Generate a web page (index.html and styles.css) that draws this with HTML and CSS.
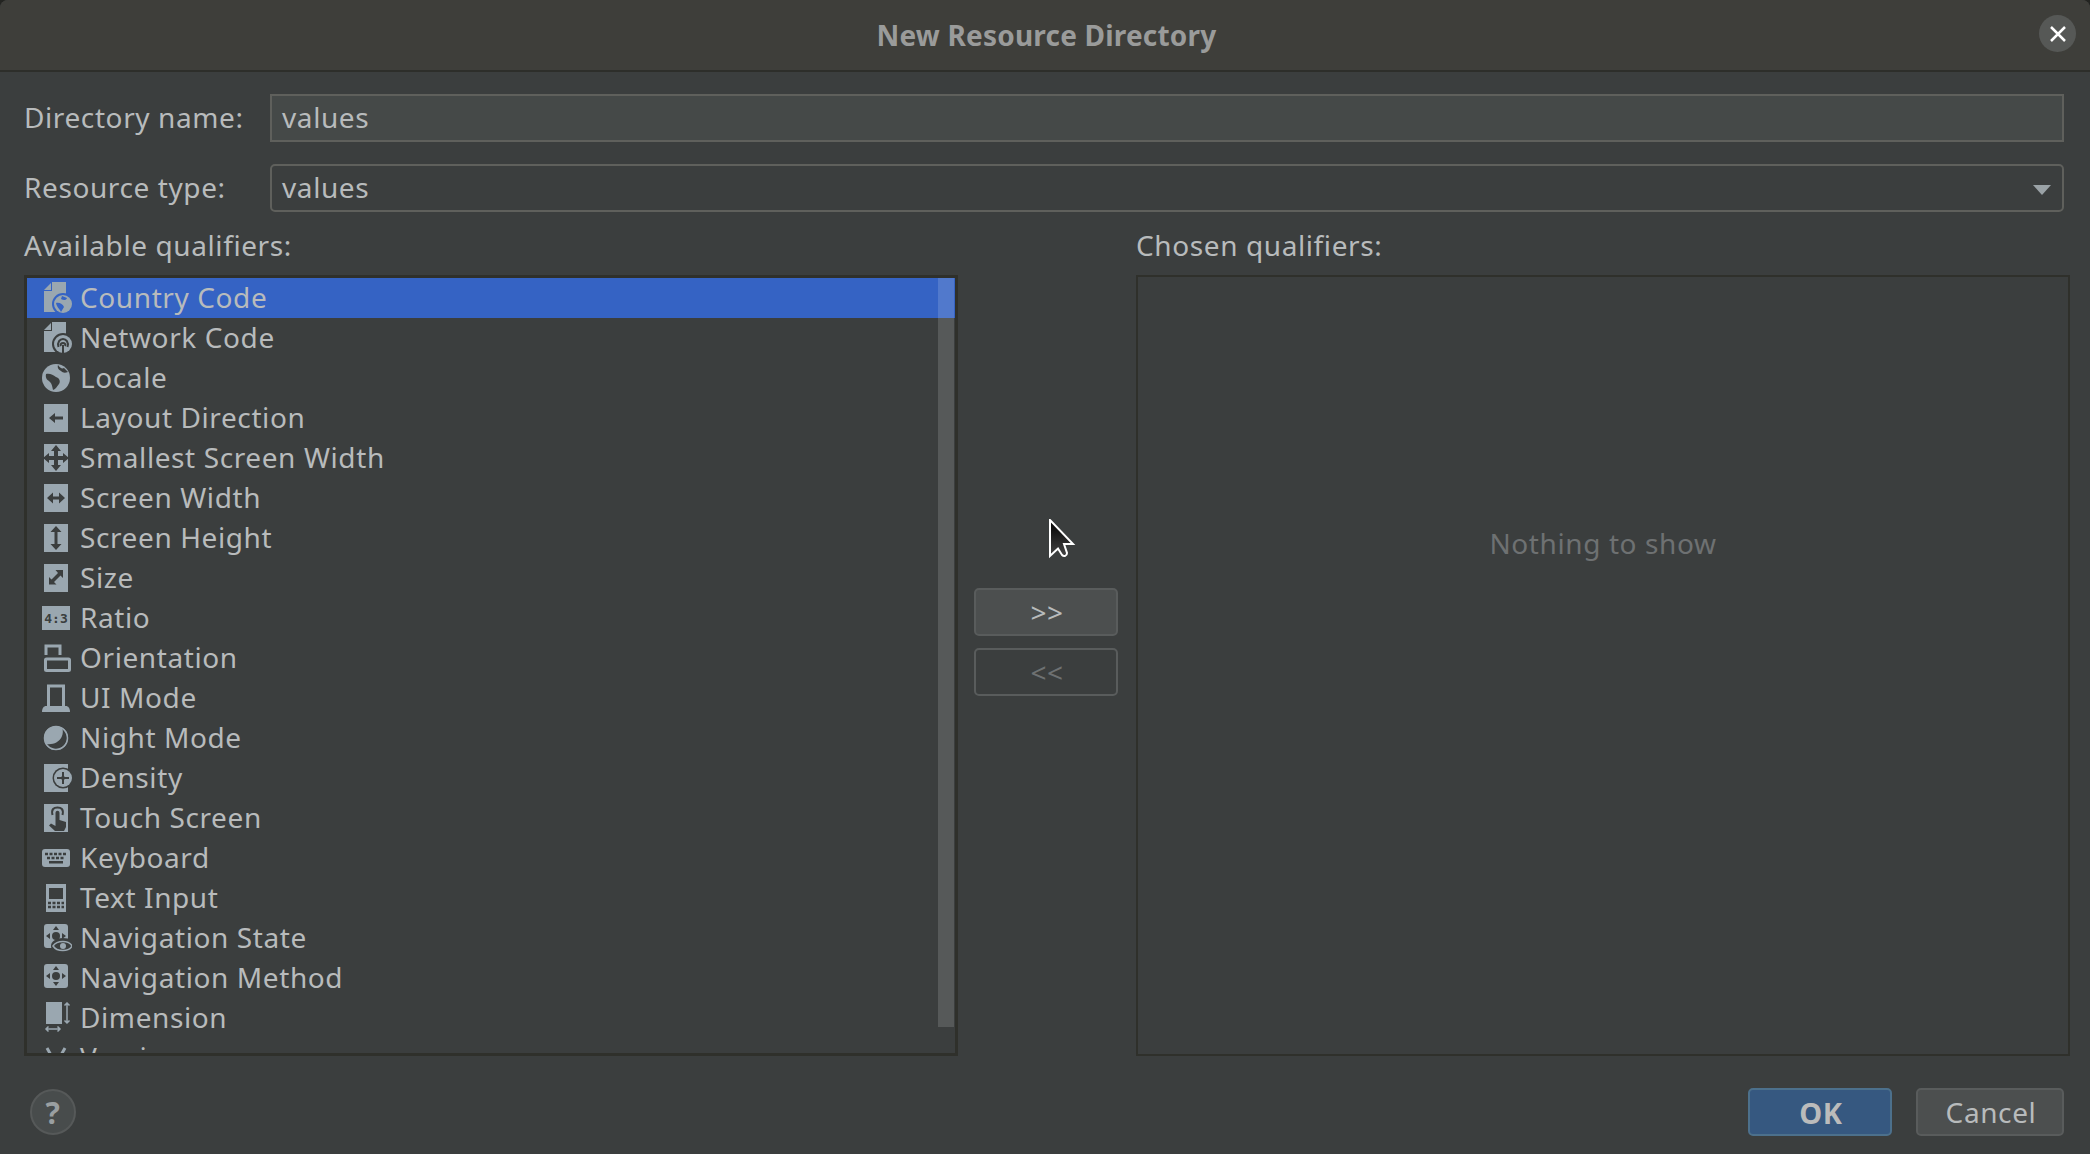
FILE: index.html
```html
<!DOCTYPE html>
<html lang="en">
<head>
  <meta charset="UTF-8">
  <title>New Resource Directory</title>
  <link rel="stylesheet" href="styles.css">
</head>
<body>
  <svg class="sprite" xmlns="http://www.w3.org/2000/svg">
    <symbol id="i-file" viewBox="0 0 32 32"><path d="M4 8L11 1V8Z"/><path d="M12 0H26V30H4V9H12Z"/></symbol>
    <symbol id="i-globe" viewBox="0 0 32 32"><circle cx="16" cy="16" r="14"/><path class="cut" d="M18 3C20 6 22 7 24 6L28 10C25 11 23 11 21 9C19 8 17 6 18 3ZM6 12C10 11 13 13 16 15C19 16 21 19 19 22C17 24 16 27 13 28C12 24 12 22 10 20C8 18 5 17 6 12Z"/></symbol>
    <symbol id="i-box" viewBox="0 0 32 32"><rect x="4" y="2" width="24" height="28"/></symbol>
  </svg>

  <div class="dialog">
    <header class="title-bar">
      <h1>New Resource Directory</h1>
      <button class="close" type="button">
        <svg width="18" height="18" viewBox="0 0 18 18"><path d="M2 2L16 16M16 2L2 16"/></svg>
      </button>
    </header>

    <main class="content">
      <div class="field">
        <label>Directory name:</label>
        <div class="input">values</div>
      </div>
      <div class="field">
        <label>Resource type:</label>
        <div class="select">values<span class="caret"></span></div>
      </div>

      <div class="qualifiers">
        <section class="col-left">
          <div class="col-label">Available qualifiers:</div>
          <div class="list">
            <ul>
              <li class="selected">
                <svg class="ico" viewBox="0 0 32 32"><use href="#i-file"/><circle class="cut" cx="23" cy="22" r="11"/><circle cx="23" cy="22" r="9"/><path class="cut" d="M22 14L27 16C26 19 23 18 21 17ZM16 21C19 20 23 22 24 25L21 30C20 27 17 26 16 21Z"/></svg>
                Country Code
              </li>
              <li>
                <svg class="ico" viewBox="0 0 32 32"><use href="#i-file"/><circle class="cut" cx="23" cy="22" r="11"/><circle cx="23" cy="22" r="9"/><path class="cut-line" d="M18.500 25C17 20 20 17 23 17S29 20 27.500 25M21 24C20 22 21.500 21 23 21S26 22 25 24"/><path class="cut-line" d="M23 23V31"/></svg>
                Network Code
              </li>
              <li><svg class="ico" viewBox="0 0 32 32"><use href="#i-globe"/></svg>Locale</li>
              <li>
                <svg class="ico" viewBox="0 0 32 32"><use href="#i-box"/><path class="cut" d="M9 16L15 11V14.500H23V17.500H15V21Z"/></svg>
                Layout Direction
              </li>
              <li>
                <svg class="ico" viewBox="0 0 32 32"><use href="#i-box"/><path class="cut" d="M16 3L21 9H18V14H23V11L29 16L23 21V18H18V23H21L16 29L11 23H14V18H9V21L3 16L9 11V14H14V9H11Z"/></svg>
                Smallest Screen Width
              </li>
              <li>
                <svg class="ico" viewBox="0 0 32 32"><use href="#i-box"/><path class="cut" d="M7 16L13 10.500V14.500H19V10.500L25 16L19 21.500V17.500H13V21.500Z"/></svg>
                Screen Width
              </li>
              <li>
                <svg class="ico" viewBox="0 0 32 32"><use href="#i-box"/><path class="cut" d="M16 4L21.500 10H17.500V22H21.500L16 28L10.500 22H14.500V10H10.500Z"/></svg>
                Screen Height
              </li>
              <li>
                <svg class="ico" viewBox="0 0 32 32"><use href="#i-box"/><path class="cut" d="M23 8V16L20.500 13.500L14 20L16.500 22.500H9V15L11.500 17.500L18 11L15.500 8Z"/></svg>
                Size
              </li>
              <li>
                <svg class="ico" viewBox="0 0 32 32"><rect x="2" y="4" width="28" height="24"/><text class="ratio" x="16" y="21" text-anchor="middle">4:3</text></svg>
                Ratio
              </li>
              <li>
                <svg class="ico" viewBox="0 0 32 32"><path class="line" d="M6 13V4H20V13"/><rect class="line" x="5.500" y="17" width="24" height="11.500" rx="1"/></svg>
                Orientation
              </li>
              <li>
                <svg class="ico" viewBox="0 0 32 32"><path class="line" d="M8.500 24V4H23.500V24"/><path d="M2 30C2 26 4 24 6 24H26C28 24 30 26 30 30Z"/></svg>
                UI Mode
              </li>
              <li>
                <svg class="ico" viewBox="0 0 32 32"><circle cx="16" cy="16" r="12"/><path class="cut" d="M22 6C25 12 20 24 6 22C8 26 12 27 16 27C22 27 27 22 27 16C27 12 25 8 22 6Z"/><circle class="line-thin" cx="16" cy="16" r="11.500"/></svg>
                Night Mode
              </li>
              <li>
                <svg class="ico" viewBox="0 0 32 32"><use href="#i-box"/><circle class="cut" cx="23" cy="16" r="10.500"/><circle cx="23" cy="16" r="9"/><path class="cut-line" d="M23 10V22M17 16H29"/><circle class="cut" cx="23" cy="16" r="2"/></svg>
                Density
              </li>
              <li>
                <svg class="ico" viewBox="0 0 32 32"><use href="#i-box"/><path class="cut-line" d="M12.500 13C11 7 14 5.500 17.500 5.500S24 7 22.500 13"/><path class="cut" d="M15.500 11C15.500 8 19.500 8 19.500 11V18L26 20V25L24 29H15L9 23.500L11 21.500L15.500 24Z"/></svg>
                Touch Screen
              </li>
              <li>
                <svg class="ico" viewBox="0 0 32 32"><rect x="2" y="7" width="28" height="18" rx="3"/><path class="cut-dash" d="M5 12H27M7 16H25"/><path class="cut" d="M9 19H23V21.500H9Z"/></svg>
                Keyboard
              </li>
              <li>
                <svg class="ico" viewBox="0 0 32 32"><rect x="6" y="2" width="20" height="28"/><rect class="cut" x="9" y="6" width="14" height="11"/><path class="cut-dash" d="M8 21H24M8 25H24"/></svg>
                Text Input
              </li>
              <li>
                <svg class="ico" viewBox="0 0 32 32"><rect x="4" y="2" width="24" height="24" rx="3"/><circle class="cut" cx="16" cy="14" r="4"/><path class="cut" d="M16 4L19 8H13ZM6 14L10 11V17ZM26 14L22 11V17Z"/><ellipse class="cut" cx="23" cy="24" rx="12" ry="8"/><path class="line-thin" d="M13 24C17 18 29 18 32 24C29 30 17 30 13 24Z"/><circle cx="23" cy="24" r="3"/></svg>
                Navigation State
              </li>
              <li>
                <svg class="ico" viewBox="0 0 32 32"><rect x="4" y="2" width="24" height="24" rx="3"/><circle class="cut" cx="16" cy="14" r="4"/><path class="cut" d="M16 4L19 8H13ZM16 24L19 20H13ZM6 14L10 11V17ZM26 14L22 11V17Z"/></svg>
                Navigation Method
              </li>
              <li>
                <svg class="ico" viewBox="0 0 32 32"><rect x="6" y="0" width="16" height="22"/><path class="line-thin" d="M27 1V21M24.500 3.500L27 1L29.500 3.500M24.500 18.500L27 21L29.500 18.500M6 27H20M8.500 24.500L6 27L8.500 29.500M17.500 24.500L20 27L17.500 29.500"/></svg>
                Dimension
              </li>
              <li>
                <svg class="ico" viewBox="0 0 32 32"><path class="line" d="M7 6L16 22L25 6"/></svg>
                Version
              </li>
            </ul>
            <div class="scrollbar"></div>
          </div>
        </section>

        <section class="col-mid">
          <button class="btn" type="button">&gt;&gt;</button>
          <button class="btn btn-off" type="button">&lt;&lt;</button>
        </section>

        <section class="col-right">
          <div class="col-label">Chosen qualifiers:</div>
          <div class="chosen">Nothing to show</div>
        </section>
      </div>
    </main>

    <footer class="footer">
      <button class="help" type="button">?</button>
      <div class="actions">
        <button class="btn btn-ok" type="button">OK</button>
        <button class="btn btn-cancel" type="button">Cancel</button>
      </div>
    </footer>
  </div>

  <svg class="cursor" width="28" height="40" viewBox="0 0 28 40">
    <defs>
      <linearGradient id="cursor-fill" x1="0" y1="0" x2="0" y2="1">
        <stop offset="0" stop-color="#000"/>
        <stop offset="1" stop-color="#444"/>
      </linearGradient>
    </defs>
    <path d="M1 1V37L9 29.500L13 36C15 38 18 37 18 34L15 25H24Z" fill="url(#cursor-fill)" stroke="#fff" stroke-width="2"/>
  </svg>
</body>
</html>
```

FILE: styles.css
```css
* {
  box-sizing: border-box;
}
html, body {
  margin: 0;
  height: 100%;
  background: #232421;
}
body {
  font-family: "Noto Sans", sans-serif;
  font-size: 28px;
  letter-spacing: 0.6px;
  color: #b8bbbc;
  overflow: hidden;
}
button {
  font-family: inherit;
  letter-spacing: inherit;
}
.sprite {
  display: none;
}

.dialog {
  height: 1154px;
  display: flex;
  flex-direction: column;
  background: #3b3e3e;
  border-radius: 8px 8px 0 0;
  overflow: hidden;
}

.title-bar {
  flex: 0 0 72px;
  display: flex;
  align-items: center;
  justify-content: center;
  background: #3e3e3a;
  border-bottom: 2px solid #2d2e2a;
  position: relative;
}
.title-bar h1 {
  margin: 0 0 0 3px;
  font-size: 28px;
  letter-spacing: 0.2px;
  font-weight: 700;
  color: #9a9b9a;
}
.close {
  position: absolute;
  left: 2039px;
  top: 15px;
  width: 37px;
  height: 37px;
  padding: 0;
  border: none;
  border-radius: 50%;
  background: #565856;
  display: flex;
  align-items: center;
  justify-content: center;
}
.close path {
  stroke: #fff;
  stroke-width: 2.500;
  fill: none;
}

.content {
  flex: 1;
  padding: 22px 20px 0 24px;
  display: flex;
  flex-direction: column;
}
.field {
  display: flex;
  align-items: center;
  height: 48px;
  margin-bottom: 22px;
}
.field label {
  width: 246px;
  padding-bottom: 2px;
}
.input, .select {
  flex: 0 0 1794px;
  height: 48px;
  display: flex;
  align-items: center;
  padding: 0 0 2px 10px;
  border: 2px solid #5f605c;
}
.input {
  background: #454948;
}
.select {
  border-radius: 5px;
  position: relative;
}
.caret {
  position: absolute;
  right: 11px;
  top: 19px;
  border-left: 9px solid transparent;
  border-right: 9px solid transparent;
  border-top: 10px solid #9aa2a6;
}

.qualifiers {
  flex: 1;
  display: flex;
  margin-top: -7px;
}
.col-left {
  flex: 0 0 934px;
}
.col-right {
  flex: 0 0 934px;
}
.col-label {
  height: 36px;
  line-height: 36px;
  margin-bottom: 12px;
}
.col-mid {
  flex: 0 0 178px;
  padding: 361px 16px 0;
  display: flex;
  flex-direction: column;
  gap: 12px;
}

.list {
  height: 781px;
  border: 3px solid #2f302b;
  overflow: hidden;
  position: relative;
}
.list ul {
  margin: 0;
  padding: 0;
  list-style: none;
}
.list li {
  --cut: #3b3e3e;
  height: 40px;
  display: flex;
  align-items: center;
  gap: 8px;
  padding: 0 0 2px 13px;
}
.list li.selected {
  --cut: #3563c4;
  background: #3563c4;
}
.list li .ico {
  margin-top: 2px;
}
.scrollbar {
  position: absolute;
  right: 1px;
  top: 0;
  width: 16px;
  height: 749px;
  background: rgba(255, 255, 255, 0.14);
}

.ico {
  flex: none;
  width: 32px;
  height: 32px;
  fill: #9aa7b0;
}
.cut {
  fill: var(--cut);
}
.cut-line {
  fill: none;
  stroke: var(--cut);
  stroke-width: 2;
}
.cut-dash {
  fill: none;
  stroke: var(--cut);
  stroke-width: 2.500;
  stroke-dasharray: 3 1.500;
}
.line {
  fill: none;
  stroke: #9aa7b0;
  stroke-width: 3;
}
.line-thin {
  fill: none;
  stroke: #9aa7b0;
  stroke-width: 1.500;
}
.ratio {
  font-family: "DejaVu Sans Mono", monospace;
  font-size: 13px;
  font-weight: 700;
  letter-spacing: 0;
  fill: var(--cut);
}

.chosen {
  height: 781px;
  border: 2px solid #2f302b;
  display: flex;
  align-items: center;
  justify-content: center;
  color: #6e7172;
  padding-bottom: 246px;
}

.btn {
  width: 144px;
  height: 48px;
  padding: 0 0 0 2px;
  border: 2px solid #595c5c;
  border-radius: 5px;
  background: #4c4f4f;
  color: #b8bbbc;
  font-size: 28px;
}
.btn-off {
  background: #3b3e3e;
  color: #6e7172;
}

.footer {
  flex: 0 0 98px;
  display: flex;
  align-items: center;
  justify-content: space-between;
  padding: 14px 26px 0 30px;
}
.help {
  width: 46px;
  height: 46px;
  padding: 0;
  border: 2px solid #565959;
  border-radius: 50%;
  background: #484c4c;
  color: #9a9fa1;
  font-size: 30px;
  font-weight: 700;
}
.actions {
  display: flex;
  gap: 24px;
}
.btn-ok {
  background: #365880;
  border-color: #4c708c;
  color: #bbbbbb;
  font-weight: 700;
  font-size: 29px;
}
.btn-cancel {
  width: 148px;
}

.cursor {
  position: absolute;
  left: 1049px;
  top: 519px;
}
```
